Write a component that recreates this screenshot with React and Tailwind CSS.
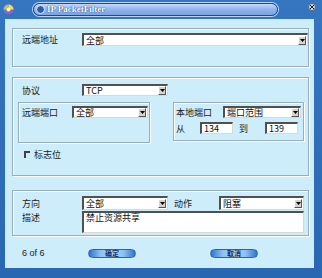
import React from "react";

const font = { fontFamily: '"Noto Sans CJK SC", "Noto Sans", sans-serif' };

function Arrow() {
  return (
    <div className="w-[8px] h-[9px] bg-[#d6d3ce] border border-t-[#fff] border-l-[#fff] border-b-[#555] border-r-[#555] flex items-center justify-center shrink-0">
      <svg width="5" height="3" viewBox="0 0 5 3"><path d="M0 0h5L2.5 3z" fill="#000" /></svg>
    </div>
  );
}

function Select({ w, h = 13, text }) {
  return (
    <div
      className="flex items-center justify-between bg-white border-t-2 border-l-2 border-b border-r border-t-[#505050] border-l-[#505050] border-b-[#d8d8d8] border-r-[#d8d8d8] pl-[2px] pr-[1px] shrink-0"
      style={{ width: w, height: h }}
    >
      <span className="text-[9px] leading-none text-[#111]">{text}</span>
      <Arrow />
    </div>
  );
}

function Input({ w, h, text }) {
  return (
    <div
      className="flex items-start bg-white border-t-2 border-l-2 border-b border-r border-t-[#505050] border-l-[#505050] border-b-[#d8d8d8] border-r-[#d8d8d8] pl-[2px] shrink-0"
      style={{ width: w, height: h }}
    >
      <span className="text-[9px] leading-[10px] text-[#111]">{text}</span>
    </div>
  );
}

const group =
  "border border-[#98aebb] shadow-[inset_1px_1px_0_#ffffff,1px_1px_0_#ffffff]";

function Btn({ text }) {
  return (
    <div className="w-[48px] h-[9px] rounded-full bg-[linear-gradient(90deg,#2e74cf,#8cc0f2_25%,#a9d3f7_50%,#8cc0f2_75%,#2e74cf)] border border-[#2a64b0] flex items-center justify-center">
      <span className="text-[7px] leading-none font-bold text-[#13306a]">{text}</span>
    </div>
  );
}

export default function App() {
  return (
    <div
      className="w-[322px] h-[278px] bg-[linear-gradient(180deg,#3675c0,#2a67b2)] flex flex-col text-[#1a1a1a]"
      style={font}
    >
      {/* title bar */}
      <div className="h-[19px] flex items-center shrink-0">
        <div className="ml-[3px] w-[11px] h-[11px]">
          <svg width="11" height="11" viewBox="0 0 11 11">
            <circle cx="5.5" cy="5.5" r="5" fill="#8f62c8" />
            <path d="M5.5 0.5a5 5 0 0 1 5 5h-5z" fill="#f2e04a" />
            <path d="M0.5 5.5a5 5 0 0 1 5-5v5z" fill="#9bd05a" />
            <circle cx="5.5" cy="5.5" r="2" fill="#fff7c0" />
          </svg>
        </div>
        <div className="ml-[19px] w-[245px] h-[13px] rounded-full border border-[#1d4c8e] bg-[linear-gradient(180deg,#c3d8f7,#8fb3ec_50%,#7aa3e5)] shadow-[0_0_0_1px_#b9d2f3] flex items-center pl-[2px]">
          <div className="w-[9px] h-[9px] rounded-full bg-[#2d5da8] border border-[#e6eefb]" />
          <span className="ml-[2px] text-[9px] leading-none font-bold text-white [text-shadow:0_0_1px_#1d3f78,0_0_1px_#1d3f78]" style={{ fontFamily: '"Liberation Serif", serif' }}>
            IP PacketFilter
          </span>
        </div>
        <div className="flex-1" />
        <div className="mr-[6px] w-[8px] h-[8px] rounded-full bg-[#c9d2dc] border border-[#5a6b80] flex items-center justify-center -mt-[6px]">
          <svg width="4" height="4" viewBox="0 0 4 4"><path d="M0 0L4 4M4 0L0 4" stroke="#222" strokeWidth="1" /></svg>
        </div>
      </div>

      {/* client */}
      <div className="ml-[5px] mr-[8px] mb-[10px] flex-1 bg-[#cdedfb] flex flex-col pl-[7px]">
        {/* group 1 */}
        <div className={`${group} mt-[9px] w-[297px] h-[39px] pt-[4px] pl-[9px]`}>
          <div className="flex items-center">
            <span className="w-[60px] text-[9px] leading-none">远端地址</span>
            <Select w={226} text="全部" />
          </div>
        </div>

        {/* group 2 */}
        <div className={`${group} mt-[10px] w-[297px] h-[99px] pt-[6px]`}>
          <div className="flex items-center pl-[9px]">
            <span className="w-[60px] text-[9px] leading-none">协议</span>
            <Select w={86} h={12} text="TCP" />
          </div>
          <div className="flex items-start mt-[6px] pl-[5px]">
            <div className={`${group} w-[132px] h-[41px] pt-[3px] pl-[3px]`}>
              <div className="flex items-center">
                <span className="w-[50px] text-[9px] leading-none">远端端口</span>
                <Select w={76} h={12} text="全部" />
              </div>
            </div>
            <div className={`${group} ml-[23px] w-[131px] h-[39px] pt-[3px] pl-[2px]`}>
              <div className="flex items-center">
                <span className="w-[47px] text-[9px] leading-none">本地端口</span>
                <Select w={78} h={12} text="端口范围" />
              </div>
              <div className="flex items-center mt-[4px]">
                <span className="w-[24px] text-[9px] leading-none">从</span>
                <Input w={33} h={12} text="134" />
                <span className="ml-[6px] w-[26px] text-[9px] leading-none">到</span>
                <Input w={33} h={12} text="139" />
              </div>
            </div>
          </div>
          <div className="flex items-center mt-[7px] pl-[11px]">
            <div className="w-[6px] h-[7px] border-t-2 border-l-2 border-t-[#404040] border-l-[#404040]" />
            <span className="ml-[4px] text-[9px] leading-none">标志位</span>
          </div>
        </div>

        {/* group 3 */}
        <div className={`${group} mt-[14px] w-[297px] h-[46px] pt-[5px]`}>
          <div className="flex items-center pl-[9px]">
            <span className="w-[60px] text-[9px] leading-none">方向</span>
            <Select w={86} h={14} text="全部" />
            <span className="ml-[6px] w-[45px] text-[9px] leading-none">动作</span>
            <Select w={85} h={14} text="阻塞" />
          </div>
          <div className="flex items-start pl-[9px] mt-[1px]">
            <span className="w-[60px] text-[9px] leading-none mt-[2px]">描述</span>
            <Input w={222} h={22} text="禁止资源共享" />
          </div>
        </div>

        {/* footer */}
        <div className="flex items-center mt-[13px] pl-[10px]">
          <span className="w-[66px] text-[9px] leading-none" style={{ fontFamily: '"Liberation Sans", sans-serif' }}>6 of 6</span>
          <Btn text="确定" />
          <div className="w-[74px]" />
          <Btn text="取消" />
        </div>
      </div>
    </div>
  );
}
